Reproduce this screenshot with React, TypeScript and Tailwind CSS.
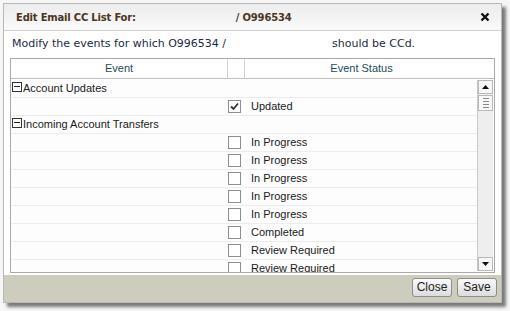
import React from "react";

const Check = ({ checked }: { checked?: boolean }) => (
  <div className="w-[13px] h-[13px] border border-[#8e8f8f] bg-white flex items-center justify-center">
    {checked && (
      <svg width="9" height="9" viewBox="0 0 9 9">
        <path d="M1 4.5 L3.5 7 L8 1.5" stroke="#333" strokeWidth="1.8" fill="none" />
      </svg>
    )}
  </div>
);

const Minus = () => (
  <div className="w-[10px] h-[10px] border border-[#333] bg-white flex items-center justify-center mt-[-4px]">
    <div className="w-[6px] h-[1px] bg-[#222]" />
  </div>
);

type Row = { kind: "group"; label: string } | { kind: "item"; label: string; checked?: boolean };

const rows: Row[] = [
  { kind: "group", label: "Account Updates" },
  { kind: "item", label: "Updated", checked: true },
  { kind: "group", label: "Incoming Account Transfers" },
  { kind: "item", label: "In Progress" },
  { kind: "item", label: "In Progress" },
  { kind: "item", label: "In Progress" },
  { kind: "item", label: "In Progress" },
  { kind: "item", label: "In Progress" },
  { kind: "item", label: "Completed" },
  { kind: "item", label: "Review Required" },
  { kind: "item", label: "Review Required" },
];

export default function App() {
  return (
    <div className="w-[510px] h-[311px] bg-[#f6f6f6] pt-[3px] pl-[3px] overflow-hidden" style={{ fontFamily: '"Liberation Sans", Arial, sans-serif' }}>
      <div className="w-[499px] h-[300px] border border-[#b8b8b8] bg-white flex flex-col shadow-[4px_4px_3px_rgba(0,0,0,0.5)]">
        {/* Title */}
        <div className="h-[27px] shrink-0 flex items-center border-b border-[#cfcfcf] bg-gradient-to-b from-[#ececec] to-[#fafafa] pl-[12px] pr-[11px]" style={{ fontFamily: '"DejaVu Sans", Verdana, sans-serif' }}>
          <span className="text-[10px] font-bold text-[#4b3524] tracking-[-0.2px]">Edit Email CC List For:</span>
          <span className="ml-[100px] text-[10px] font-bold text-[#4b3524] tracking-[-0.2px]">/ O996534</span>
          <svg className="ml-auto" width="10" height="10" viewBox="0 0 10 10">
            <path d="M1.5 1.5 L8.5 8.5 M8.5 1.5 L1.5 8.5" stroke="#111" strokeWidth="2.4" />
          </svg>
        </div>
        {/* Description */}
        <div className="h-[27px] shrink-0 flex items-center pl-[8px] text-[11px] text-[#1b2a48]" style={{ fontFamily: '"DejaVu Sans", Verdana, sans-serif' }}>
          <span>Modify the events for which O996534 /</span>
          <span className="ml-[106px]">should be CCd.</span>
        </div>
        {/* Table */}
        <div className="mx-[6px] h-[215px] shrink-0 border border-[#a9a9a9] flex flex-col">
          <div className="h-[20px] shrink-0 flex border-b border-[#bdbdbd] text-[11px] text-[#1e4b5a]">
            <div className="w-[217px] border-r border-[#d2d2d2] flex items-center justify-center">Event</div>
            <div className="w-[17px] border-r border-[#d2d2d2]" />
            <div className="flex-1 flex items-center justify-center pr-[16px]">Event Status</div>
          </div>
          <div className="flex-1 flex overflow-hidden">
            <div className="flex-1 overflow-hidden pt-[1px]">
              {rows.map((r, i) => (
                <div key={i} className="h-[18px] flex items-center border-b border-[#ececec] text-[11px] text-[#1a1a1a] bg-[#fdfdfd]">
                  {r.kind === "group" ? (
                    <div className="flex items-center pl-[1px]">
                      <Minus />
                      <span className="ml-[1px]">{r.label}</span>
                    </div>
                  ) : (
                    <>
                      <div className="w-[217px] shrink-0" />
                      <div className="w-[18px] shrink-0 flex items-center">
                        <Check checked={r.checked} />
                      </div>
                      <span className="ml-[5px]">{r.label}</span>
                    </>
                  )}
                </div>
              ))}
            </div>
            {/* Scrollbar */}
            <div className="w-[16px] shrink-0 bg-[#eeeeee] border-l border-[#c8c8c8] flex flex-col my-[1px] mr-[1px]">
              <div className="h-[14px] bg-[#f7f7f7] border border-[#b9b9b9] flex items-center justify-center">
                <svg width="7" height="4" viewBox="0 0 7 4"><path d="M0 4 L3.5 0 L7 4 Z" fill="#111" /></svg>
              </div>
              <div className="mt-[1px] h-[16px] bg-[#f7f7f7] border border-[#b9b9b9] flex flex-col items-center justify-center gap-[2px]">
                <div className="w-[6px] h-[1px] bg-[#888]" />
                <div className="w-[6px] h-[1px] bg-[#888]" />
                <div className="w-[6px] h-[1px] bg-[#888]" />
                <div className="w-[6px] h-[1px] bg-[#888]" />
              </div>
              <div className="flex-1" />
              <div className="h-[14px] bg-[#f7f7f7] border border-[#b9b9b9] flex items-center justify-center">
                <svg width="7" height="4" viewBox="0 0 7 4"><path d="M0 0 L3.5 4 L7 0 Z" fill="#111" /></svg>
              </div>
            </div>
          </div>
        </div>
        {/* Footer */}
        <div className="flex-1 mt-[2px] bg-[#cecdbd] flex items-center justify-end gap-[5px] pr-[4px] pb-[3px]">
          <button className="h-[19px] w-[40px] rounded-[3px] border border-[#8d8d8d] bg-gradient-to-b from-[#fbfbfb] to-[#dcdcdc] text-[12px] text-[#222] leading-none">Close</button>
          <button className="h-[19px] w-[40px] rounded-[3px] border border-[#8d8d8d] bg-gradient-to-b from-[#fbfbfb] to-[#dcdcdc] text-[12px] text-[#222] leading-none">Save</button>
        </div>
      </div>
    </div>
  );
}
